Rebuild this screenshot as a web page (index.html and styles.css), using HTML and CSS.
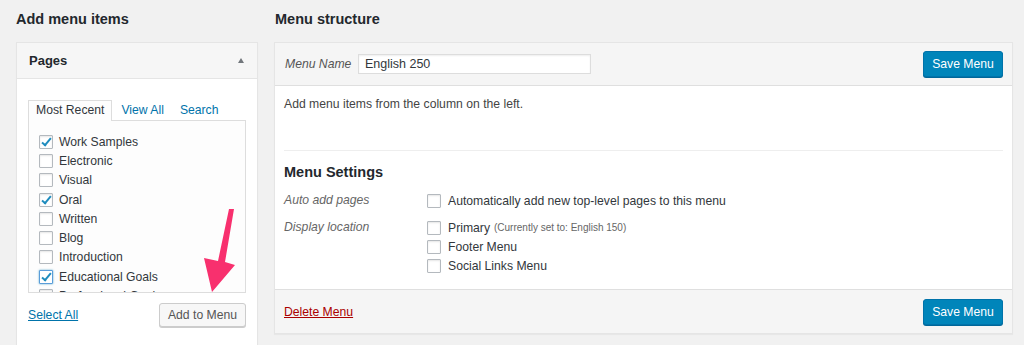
FILE: index.html
```html
<!DOCTYPE html>
<html>
<head>
<meta charset="utf-8">
<link rel="stylesheet" href="styles.css">
</head>
<body>
<div class="page">
  <div class="col-left">
    <h2 class="title">Add menu items</h2>
    <div class="panel">
      <div class="panel-head">
        <h3>Pages</h3>
        <span class="toggle"></span>
      </div>
      <div class="panel-body">
        <ul class="tabs">
          <li class="tab active">Most Recent</li>
          <li class="tab"><a href="#">View All</a></li>
          <li class="tab"><a href="#">Search</a></li>
        </ul>
        <div class="tab-box">
          <ul class="checklist">
            <li><span class="cb checked"></span>Work Samples</li>
            <li><span class="cb"></span>Electronic</li>
            <li><span class="cb"></span>Visual</li>
            <li><span class="cb checked"></span>Oral</li>
            <li><span class="cb"></span>Written</li>
            <li><span class="cb"></span>Blog</li>
            <li><span class="cb"></span>Introduction</li>
            <li><span class="cb checked focus"></span>Educational Goals</li>
            <li><span class="cb"></span>Professional Goals</li>
          </ul>
        </div>
        <div class="panel-actions">
          <a href="#" class="select-all">Select All</a>
          <button class="btn-secondary">Add to Menu</button>
        </div>
      </div>
    </div>
    <svg class="arrow" width="40" height="90" viewBox="0 0 40 90">
      <polygon points="25,1 30,1 21,54 31,57 8,84 0,50 14,53" fill="#f8306e"/>
    </svg>
  </div>

  <div class="col-right">
    <h2 class="title">Menu structure</h2>
    <div class="menu-box">
      <div class="menu-head">
        <label class="name-label">Menu Name</label>
        <div class="name-input">English 250</div>
        <button class="btn-primary">Save Menu</button>
      </div>
      <div class="menu-body">
        <p class="intro">Add menu items from the column on the left.</p>
        <div class="settings">
          <h3 class="settings-title">Menu Settings</h3>
          <div class="setting-row first">
            <div class="setting-label">Auto add pages</div>
            <div class="setting-opts">
              <div class="opt"><span class="cb"></span>Automatically add new top-level pages to this menu</div>
            </div>
          </div>
          <div class="setting-row">
            <div class="setting-label">Display location</div>
            <div class="setting-opts">
              <div class="opt"><span class="cb"></span>Primary <span class="note">(Currently set to: English 150)</span></div>
              <div class="opt"><span class="cb"></span>Footer Menu</div>
              <div class="opt"><span class="cb"></span>Social Links Menu</div>
            </div>
          </div>
        </div>
      </div>
      <div class="menu-foot">
        <a href="#" class="delete">Delete Menu</a>
        <button class="btn-primary">Save Menu</button>
      </div>
    </div>
  </div>
</div>
</body>
</html>
```

FILE: styles.css
```css
* { box-sizing: border-box; }
html, body {
  margin: 0;
  padding: 0;
  background: #f1f1f1;
  font-family: "Liberation Sans", Arial, sans-serif;
  font-size: 12.2px;
  color: #444;
  overflow: hidden;
}
.page {
  display: flex;
  gap: 16px;
  padding-left: 16px;
  height: 345px;
}
.col-left {
  width: 242px;
  flex: none;
  position: relative;
}
.col-right {
  width: 739px;
  flex: none;
}
.title {
  margin: 9px 0 13px;
  font-size: 14.5px;
  line-height: 20px;
  font-weight: 700;
  color: #23282d;
}
.col-right .title { margin-left: 1px; }

/* Left panel */
.panel {
  border: 1px solid #e5e5e5;
  box-shadow: 0 1px 1px rgba(0,0,0,.04);
  background: #fff;
  height: 320px;
}
.panel-head {
  height: 36px;
  background: #f6f6f6;
  border-bottom: 1px solid #e5e5e5;
  display: flex;
  align-items: center;
  justify-content: space-between;
  padding: 0 13px 0 12px;
}
.panel-head h3 {
  margin: 0;
  font-size: 13px;
  font-weight: 700;
  color: #23282d;
}
.toggle {
  width: 0;
  height: 0;
  border-left: 3.5px solid transparent;
  border-right: 3.5px solid transparent;
  border-bottom: 5px solid #72777c;
  margin-top: -1px;
}
.panel-body {
  padding: 21px 11px 0;
}
.tabs {
  list-style: none;
  margin: 0;
  padding: 0;
  display: flex;
  height: 20px;
  position: relative;
  z-index: 1;
}
.tab {
  padding: 0 8px;
  line-height: 20px;
  color: #0073aa;
}
.tab a { color: #0073aa; text-decoration: none; }
.tab.active {
  border: 1px solid #ddd;
  border-bottom: none;
  background: #fdfdfd;
  color: #32373c;
  height: 21px;
  line-height: 19px;
  padding: 0 7px;
}
.tab:nth-child(2) { padding-left: 9px; }
.tab-box {
  border: 1px solid #ddd;
  background: #fdfdfd;
  height: 173px;
  overflow: hidden;
}
.checklist {
  list-style: none;
  margin: 0;
  padding: 11px 10px 0;
}
.checklist li {
  height: 19.3px;
  display: flex;
  align-items: center;
  color: #32373c;
}
.cb {
  width: 14px;
  height: 14px;
  border: 1px solid #b4b9be;
  background: #fff;
  box-shadow: inset 0 1px 2px rgba(0,0,0,.1);
  border-radius: 1px;
  margin-right: 6px;
  flex: none;
  position: relative;
}
.cb.checked::after {
  content: "";
  position: absolute;
  left: 4px;
  top: 0px;
  width: 3px;
  height: 8px;
  border-right: 2px solid #1e8cbe;
  border-bottom: 2px solid #1e8cbe;
  transform: rotate(40deg);
}
.cb.focus {
  border-color: #5b9dd9;
  box-shadow: 0 0 2px rgba(30,140,190,.8);
}
.panel-actions {
  display: flex;
  justify-content: space-between;
  align-items: center;
  margin-top: 10px;
}
.select-all {
  color: #0073aa;
  text-decoration: underline;
}
.btn-secondary {
  height: 24px;
  width: 87px;
  padding: 0;
  border: 1px solid #ccc;
  border-radius: 3px;
  background: #f7f7f7;
  box-shadow: 0 1px 0 #ccc;
  color: #555;
  font-family: inherit;
  font-size: 12.2px;
}
.arrow {
  position: absolute;
  left: 188px;
  top: 208px;
}

/* Right box */
.menu-box {
  border: 1px solid #e5e5e5;
  box-shadow: 0 1px 1px rgba(0,0,0,.04);
  background: #fff;
}
.menu-head {
  height: 43px;
  background: #f5f5f5;
  border-bottom: 1px solid #dfdfdf;
  display: flex;
  align-items: center;
  padding: 0 9px 0 10px;
}
.name-label {
  font-style: italic;
  color: #555;
  width: 73px;
}
.name-input {
  width: 233px;
  height: 20px;
  background: #fff;
  border: 1px solid #ddd;
  box-shadow: inset 0 1px 2px rgba(0,0,0,.07);
  padding: 0 6px;
  line-height: 18px;
  font-size: 12.5px;
  color: #32373c;
}
.btn-primary {
  margin-left: auto;
  width: 80px;
  height: 26px;
  padding: 0;
  background: #0085ba;
  border: 1px solid #0073aa;
  border-radius: 3px;
  box-shadow: 0 1px 0 #006799;
  color: #fff;
  font-family: inherit;
  font-size: 12.2px;
}
.menu-body {
  padding: 0 9px 14px 9px;
}
.intro {
  margin: 0;
  padding-top: 9px;
  line-height: 19px;
  color: #444;
}
.settings {
  margin-top: 36px;
  border-top: 1px solid #eee;
}
.settings-title {
  margin: 11px 0 9px;
  font-size: 14.5px;
  line-height: 20px;
  font-weight: 700;
  color: #23282d;
}
.setting-row {
  display: flex;
  margin-top: 8px;
}
.setting-row.first { margin-top: 0; }
.setting-label {
  width: 143px;
  line-height: 19px;
  font-style: italic;
  color: #666;
}
.opt {
  height: 19px;
  display: flex;
  align-items: center;
  color: #32373c;
}
.opt .cb { margin-right: 7px; }
.note {
  font-size: 10px;
  color: #666;
  margin-left: 4px;
}
.menu-foot {
  height: 44px;
  background: #f5f5f5;
  border-top: 1px solid #dfdfdf;
  display: flex;
  align-items: center;
  padding: 0 9px 0 9px;
}
.delete {
  color: #a00;
  text-decoration: underline;
}
```
